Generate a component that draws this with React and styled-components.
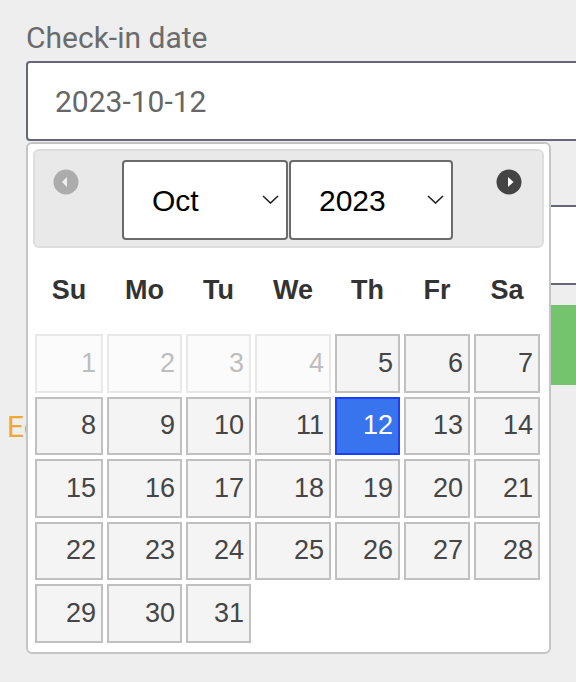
import React from "react";
import styled, { createGlobalStyle } from "styled-components";

const GlobalStyle = createGlobalStyle`
  html, body { margin: 0; padding: 0; background: #eeeeee; overflow: hidden; }
  * { box-sizing: border-box; }
`;

const COLS = "68px 75px 65px 76px 65px 66px 66px";

const Page = styled.div`
  position: relative;
  width: 576px;
  height: 682px;
  background: #eeeeee;
  padding-top: 21px;
  font-family: Roboto, "Liberation Sans", sans-serif;
  overflow: hidden;
`;

const FormColumn = styled.div`
  display: flex;
  flex-direction: column;
  width: 620px;
  padding-left: 26px;
`;

const Label = styled.label`
  font-size: 30px;
  line-height: 33px;
  color: #6b6b6b;
  margin-top: ${(p) => p.$top || 0}px;
  margin-bottom: 7px;
`;

const TextInput = styled.input`
  height: 80px;
  width: 100%;
  border: 2px solid #636777;
  border-radius: 4px;
  background: #ffffff;
  padding: 0 0 0 27px;
  font-family: Roboto, "Liberation Sans", sans-serif;
  font-size: 30px;
  color: #666666;
  outline: none;
`;

const SubmitButton = styled.button`
  margin-top: 20px;
  height: 80px;
  width: 100%;
  border: none;
  border-radius: 4px;
  background: #74c46d;
  color: #ffffff;
  font-family: Roboto, "Liberation Sans", sans-serif;
  font-size: 30px;
`;

const EditLink = styled.a`
  display: block;
  margin-top: 25px;
  padding-left: 7px;
  font-size: 30px;
  line-height: 33px;
  color: #f0a92e;
  text-decoration: none;
`;

const Picker = styled.div`
  position: absolute;
  left: 26px;
  top: 142px;
  width: 525px;
  background: #ffffff;
  border: 2px solid #c5c5c5;
  border-radius: 6px;
  padding: 5px 5px 0 5px;
  font-family: "Liberation Sans", Arial, sans-serif;
`;

const Header = styled.div`
  display: grid;
  grid-template-columns: 1fr auto 1fr;
  align-items: start;
  height: 99px;
  padding: 9px 20px 0 18px;
  background: #e9e9e9;
  border: 2px solid #dddddd;
  border-radius: 6px;
`;

const NavButton = styled.span`
  display: flex;
  width: 26px;
  height: 26px;
  margin-top: 9px;
  justify-self: ${(p) => (p.$side === "prev" ? "start" : "end")};
  opacity: ${(p) => (p.$disabled ? 0.35 : 1)};
`;

const Title = styled.div`
  display: flex;
  gap: 1px;
`;

const SelectWrap = styled.div`
  position: relative;
  width: ${(p) => p.$w}px;
`;

const Select = styled.select`
  appearance: none;
  -webkit-appearance: none;
  width: 100%;
  height: 80px;
  border: 2px solid #6b6b6b;
  border-radius: 4px;
  background: #ffffff;
  padding: 0 0 0 28px;
  font-family: "Liberation Sans", Arial, sans-serif;
  font-size: 30px;
  color: #000000;
  outline: none;
`;

const Chevron = styled.svg`
  position: absolute;
  right: 9px;
  top: 35px;
  pointer-events: none;
`;

const DayNames = styled.div`
  display: grid;
  grid-template-columns: ${COLS};
  column-gap: 4px;
  height: 84px;
  align-items: center;
  margin-left: 2px;
`;

const DayName = styled.span`
  text-align: center;
  font-weight: bold;
  font-size: 27px;
  color: #333333;
`;

const Days = styled.div`
  display: grid;
  grid-template-columns: ${COLS};
  grid-auto-rows: 58.5px;
  column-gap: 4px;
  row-gap: 4px;
  margin: 2px 0 9px 2px;
`;

const Day = styled.a`
  display: flex;
  align-items: center;
  justify-content: flex-end;
  padding-right: 5px;
  font-size: 27px;
  text-decoration: none;
  border: 2px solid ${(p) => (p.$active ? "#1c40f0" : "#c0c0c0")};
  background: ${(p) => (p.$active ? "#3874ee" : "#f4f4f4")};
  color: ${(p) => (p.$active ? "#ffffff" : "#454545")};
  opacity: ${(p) => (p.$disabled ? 0.35 : 1)};
`;

const Blank = styled.span``;

function NavIcon({ dir }) {
  return (
    <svg width="26" height="26" viewBox="0 0 26 26">
      <circle cx="13" cy="13" r="12.5" fill={dir === "prev" ? "#3c3c3c" : "#444444"} />
      {dir === "prev" ? (
        <polygon points="14,8 14,18 9,13" fill="#ffffff" />
      ) : (
        <polygon points="12,8 12,18 17.5,13" fill="#ffffff" />
      )}
    </svg>
  );
}

const ChevronIcon = () => (
  <Chevron width="17" height="9" viewBox="0 0 17 9">
    <polyline points="1,1 8.5,8 16,1" fill="none" stroke="#222" strokeWidth="1.6" />
  </Chevron>
);

const names = ["Su", "Mo", "Tu", "We", "Th", "Fr", "Sa"];
const months = ["Jan", "Feb", "Mar", "Apr", "May", "Jun", "Jul", "Aug", "Sep", "Oct", "Nov", "Dec"];
const years = Array.from({ length: 21 }, (_, i) => 2013 + i);

export default function App() {
  const cells = [];
  for (let d = 1; d <= 31; d++) {
    cells.push(
      <Day key={d} href="#" $disabled={d < 5} $active={d === 12} onClick={(e) => e.preventDefault()}>
        {d}
      </Day>
    );
  }
  cells.push(<Blank key="b1" />, <Blank key="b2" />, <Blank key="b3" />, <Blank key="b4" />);

  return (
    <>
      <GlobalStyle />
      <Page>
        <FormColumn>
          <Label>Check-in date</Label>
          <TextInput defaultValue="2023-10-12" />
          <Label $top={24}>Check-out date</Label>
          <TextInput defaultValue="" />
          <SubmitButton>Book now</SubmitButton>
        </FormColumn>
        <EditLink href="#">Edit booking</EditLink>

        <Picker>
          <Header>
            <NavButton $side="prev" $disabled>
              <NavIcon dir="prev" />
            </NavButton>
            <Title>
              <SelectWrap $w={166}>
                <Select defaultValue="Oct">
                  {months.map((m) => (
                    <option key={m}>{m}</option>
                  ))}
                </Select>
                <ChevronIcon />
              </SelectWrap>
              <SelectWrap $w={164}>
                <Select defaultValue="2023">
                  {years.map((y) => (
                    <option key={y}>{y}</option>
                  ))}
                </Select>
                <ChevronIcon />
              </SelectWrap>
            </Title>
            <NavButton $side="next">
              <NavIcon dir="next" />
            </NavButton>
          </Header>
          <DayNames>
            {names.map((n) => (
              <DayName key={n}>{n}</DayName>
            ))}
          </DayNames>
          <Days>{cells}</Days>
        </Picker>
      </Page>
    </>
  );
}
